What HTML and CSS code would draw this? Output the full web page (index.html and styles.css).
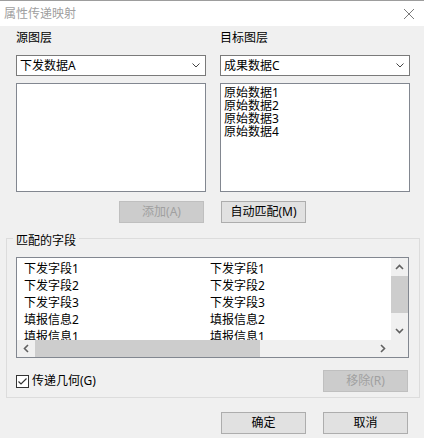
FILE: index.html
```html
<!DOCTYPE html>
<html lang="zh">
<head>
<meta charset="utf-8">
<title>属性传递映射</title>
<link rel="stylesheet" href="styles.css">
</head>
<body>
<div class="window">
  <div class="titlebar">
    <span class="title">属性传递映射</span>
    <svg class="close" width="12" height="12" viewBox="0 0 12 12"><path d="M1 1 L11 11 M11 1 L1 11" stroke="#7a7a7a" stroke-width="1" fill="none"/></svg>
  </div>
  <div class="content">
    <div class="layers">
      <div class="col">
        <div class="label">源图层</div>
        <div class="combo"><span>下发数据A</span>
          <svg class="chev" width="8" height="5" viewBox="0 0 8 5"><path d="M0.5 0.5 L4 4 L7.5 0.5" stroke="#444" fill="none"/></svg>
        </div>
        <div class="listbox"></div>
      </div>
      <div class="col">
        <div class="label">目标图层</div>
        <div class="combo"><span>成果数据C</span>
          <svg class="chev" width="8" height="5" viewBox="0 0 8 5"><path d="M0.5 0.5 L4 4 L7.5 0.5" stroke="#444" fill="none"/></svg>
        </div>
        <div class="listbox target">
          <div>原始数据1</div>
          <div>原始数据2</div>
          <div>原始数据3</div>
          <div>原始数据4</div>
        </div>
      </div>
    </div>
    <div class="btnrow">
      <button class="btn disabled left">添加(A)</button>
      <button class="btn right">自动匹配(M)</button>
    </div>
    <div class="group">
      <div class="group-title">匹配的字段</div>
      <div class="fieldlist">
        <div class="rows">
          <div class="row"><span>下发字段1</span><span>下发字段1</span></div>
          <div class="row"><span>下发字段2</span><span>下发字段2</span></div>
          <div class="row"><span>下发字段3</span><span>下发字段3</span></div>
          <div class="row"><span>填报信息2</span><span>填报信息2</span></div>
          <div class="row"><span>填报信息1</span><span>填报信息1</span></div>
        </div>
        <div class="vscroll">
          <svg class="arrow" width="9" height="6" viewBox="0 0 9 6"><path d="M1 5 L4.5 1.5 L8 5" stroke="#606060" stroke-width="1.6" fill="none"/></svg>
          <div class="vthumb"></div>
          <div class="vspace"></div>
          <svg class="arrow" width="9" height="6" viewBox="0 0 9 6"><path d="M1 1 L4.5 4.5 L8 1" stroke="#606060" stroke-width="1.6" fill="none"/></svg>
        </div>
        <div class="hscroll">
          <div class="harrow"><svg width="6" height="9" viewBox="0 0 6 9"><path d="M5 1 L1.5 4.5 L5 8" stroke="#606060" stroke-width="1.6" fill="none"/></svg></div>
          <div class="hthumb"></div>
          <div class="hspace"></div>
          <div class="harrow"><svg width="6" height="9" viewBox="0 0 6 9"><path d="M1 1 L4.5 4.5 L1 8" stroke="#606060" stroke-width="1.6" fill="none"/></svg></div>
        </div>
        <div class="corner"></div>
      </div>
      <div class="optrow">
        <label class="check">
          <svg width="13" height="13" viewBox="0 0 13 13"><rect x="0.5" y="0.5" width="12" height="12" fill="#fff" stroke="#333"/><path d="M2.5 6.5 L5 9 L10.5 3.5" stroke="#333" stroke-width="1.2" fill="none"/></svg>
          <span>传递几何(G)</span>
        </label>
        <button class="btn disabled">移除(R)</button>
      </div>
    </div>
    <div class="footer">
      <button class="btn">确定</button>
      <button class="btn">取消</button>
    </div>
  </div>
</div>
</body>
</html>
```

FILE: styles.css
```css
* { box-sizing: border-box; }
html, body { margin: 0; padding: 0; }
body {
  font-family: "Noto Sans", "Noto Sans CJK SC", sans-serif;
  font-size: 12px;
  color: #000;
  background: #f0f0f0;
}
.window {
  width: 424px;
  height: 438px;
  background: #f0f0f0;
  overflow: hidden;
}
.titlebar {
  height: 26px;
  background: #fff;
  border-top: 1px solid #9d9d9d;
  display: flex;
  align-items: center;
  justify-content: space-between;
  padding: 0 9px 0 4px;
}
.title {
  color: #a0a0a0;
  line-height: 16px;
}
.close { display: block; }
.content {
  padding-top: 4px;
}
.layers {
  display: grid;
  grid-template-columns: 190px 190px;
  column-gap: 14px;
  padding-left: 16px;
}
.label {
  line-height: 16px;
  height: 16px;
}
.combo {
  margin-top: 9px;
  height: 21px;
  border: 1px solid #7a7a7a;
  background: #fff;
  display: flex;
  align-items: center;
  justify-content: space-between;
  padding: 0 5px 0 3px;
  line-height: 16px;
}
.chev { display: block; }
.listbox {
  margin-top: 7px;
  height: 109px;
  border: 1px solid #828790;
  background: #fff;
}
.listbox.target {
  padding: 2px 0 0 3px;
  line-height: 13px;
}
.btnrow {
  display: grid;
  grid-template-columns: 190px 190px;
  column-gap: 14px;
  padding-left: 16px;
  margin-top: 9px;
}
.btn {
  width: 85px;
  height: 22px;
  border: 1px solid #adadad;
  background: #e1e1e1;
  font: inherit;
  color: #000;
  padding: 0;
  line-height: 16px;
}
.btn.disabled {
  background: #cccccc;
  border-color: #bfbfbf;
  color: #a0a0a0;
}
.btnrow .left { justify-self: end; margin-right: 2px; }
.btnrow .right { justify-self: start; margin-left: 1px; }
.group {
  margin: 15px 0 0 6px;
  width: 414px;
  height: 160px;
  border: 1px solid #dcdcdc;
}
.group-title {
  margin: -6px 0 0 6px;
  padding: 0 3px;
  width: fit-content;
  background: #f0f0f0;
  line-height: 16px;
}
.fieldlist {
  margin: 8px 0 0 9px;
  width: 393px;
  height: 101px;
  border: 1px solid #828790;
  background: #fff;
  display: grid;
  grid-template-columns: 1fr 17px;
  grid-template-rows: 1fr 17px;
}
.rows {
  overflow: hidden;
  padding: 2px 0 0 7px;
}
.row {
  display: grid;
  grid-template-columns: 186px 1fr;
  line-height: 17px;
  height: 17px;
  white-space: nowrap;
}
.vscroll {
  background: #f0f0f0;
  display: flex;
  flex-direction: column;
  align-items: center;
}
.vscroll .arrow { display: block; margin: 6px 0; }
.vthumb {
  width: 17px;
  height: 37px;
  background: #cdcdcd;
}
.vspace { flex: 1; }
.hscroll {
  background: #f0f0f0;
  display: flex;
  align-items: center;
}
.harrow {
  width: 17px;
  height: 17px;
  display: flex;
  align-items: center;
  justify-content: center;
}
.harrow svg { display: block; }
.hthumb {
  width: 225px;
  height: 17px;
  margin-left: 1px;
  background: #cdcdcd;
}
.hspace { flex: 1; }
.corner { background: #f0f0f0; }
.optrow {
  display: flex;
  align-items: center;
  justify-content: space-between;
  padding: 0 11px 0 9px;
  margin-top: 12px;
}
.check {
  display: flex;
  align-items: center;
  gap: 3px;
  line-height: 16px;
}
.check svg { display: block; }
.footer {
  display: flex;
  justify-content: flex-end;
  gap: 17px;
  padding-right: 16px;
  margin-top: 14px;
}
```
